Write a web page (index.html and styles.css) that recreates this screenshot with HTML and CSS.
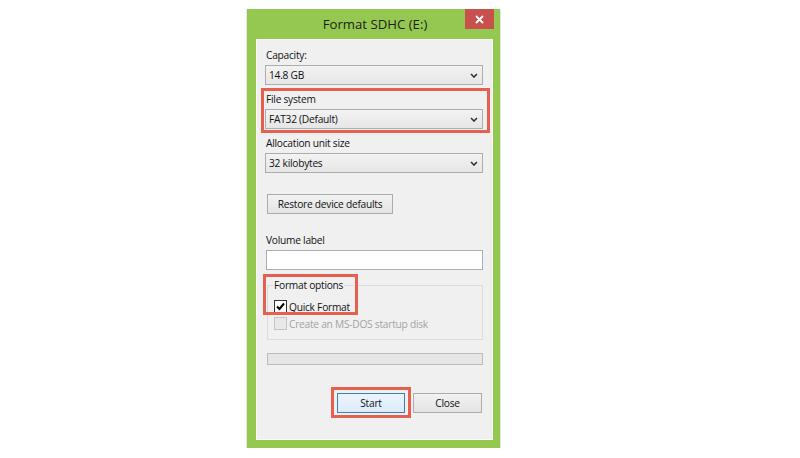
FILE: index.html
```html
<!DOCTYPE html>
<html lang="en">
<head>
    <meta charset="UTF-8">
    <title>Format SDHC (E:)</title>
    <link rel="stylesheet" href="styles.css">
</head>
<body>
    <div class="window">
        <div class="titlebar">
            <span></span>
            <div class="title">Format SDHC (E:)</div>
            <button class="close-btn" aria-label="Close">
                <svg width="9" height="9" viewBox="0 0 9 9"><path d="M1 1L8 8M8 1L1 8" stroke="#fff" stroke-width="1.8" fill="none"/></svg>
            </button>
        </div>

        <div class="client">
            <div class="label">Capacity:</div>
            <div class="combo">
                <span>14.8 GB</span>
                <svg class="chevron" width="8" height="5" viewBox="0 0 8 5"><path d="M1 1L4 4L7 1" stroke="#333" stroke-width="1.6" fill="none"/></svg>
            </div>

            <div class="marked-field">
                <div class="label">File system</div>
                <div class="combo">
                    <span>FAT32 (Default)</span>
                    <svg class="chevron" width="8" height="5" viewBox="0 0 8 5"><path d="M1 1L4 4L7 1" stroke="#333" stroke-width="1.6" fill="none"/></svg>
                </div>
            </div>

            <div class="label label-tight">Allocation unit size</div>
            <div class="combo">
                <span>32 kilobytes</span>
                <svg class="chevron" width="8" height="5" viewBox="0 0 8 5"><path d="M1 1L4 4L7 1" stroke="#333" stroke-width="1.6" fill="none"/></svg>
            </div>

            <div class="restore-row">
                <button class="btn btn-restore">Restore device defaults</button>
            </div>

            <div class="label label-volume">Volume label</div>
            <div class="textbox"></div>

            <div class="group">
                <div class="group-title">Format options</div>
                <div class="group-box">
                    <div class="check-row">
                        <span class="checkbox checked">
                            <svg width="11" height="11" viewBox="0 0 11 11"><path d="M2 5.5L4.5 8L9 2.5" stroke="#000" stroke-width="2" fill="none"/></svg>
                        </span>
                        Quick Format
                    </div>
                    <div class="check-row disabled">
                        <span class="checkbox"></span>
                        Create an MS-DOS startup disk
                    </div>
                </div>
                <span class="mark mark-options"></span>
            </div>

            <div class="progress"></div>

            <div class="buttons">
                <div class="marked-btn">
                    <button class="btn btn-default">Start</button>
                </div>
                <button class="btn btn-close">Close</button>
            </div>
        </div>
    </div>
</body>
</html>
```

FILE: styles.css
```css
body {
    margin: 0;
    background: #fff;
    font-family: "Open Sans", "Noto Sans", sans-serif;
    font-size: 10.2px;
    letter-spacing: -0.25px;
    color: #111;
}
.window {
    width: 253px;
    margin: 9px 0 0 247px;
    padding: 0 7px 8px 9px;
    box-sizing: border-box;
    background: #94c850;
    box-shadow: 0 1px 1px rgba(40, 50, 30, 0.7);
}
.titlebar {
    display: grid;
    grid-template-columns: 1fr auto 1fr;
    height: 30px;
    margin-right: -1px;
}
.title {
    align-self: center;
    font-size: 13.2px;
    letter-spacing: 0;
    color: #1e1e1e;
}
.close-btn {
    justify-self: end;
    width: 29px;
    height: 20px;
    border: none;
    padding: 0;
    background: #c9514d;
    display: flex;
    align-items: center;
    justify-content: center;
}
.client {
    height: 401px;
    box-sizing: border-box;
    padding: 8px 9px 0 9px;
    background: #f0f0f0;
    border: 1px solid #f9f9f9;
}
.label {
    line-height: 15px;
}
.label-tight {
    margin-top: 3px;
}
.label-volume {
    margin-top: 19px;
}
.combo {
    display: flex;
    align-items: center;
    justify-content: space-between;
    height: 20px;
    margin: 2px 0 0 -1px;
    padding: 0 4px 0 3px;
    box-sizing: border-box;
    border: 1px solid #adadad;
    background: linear-gradient(#f3f3f3, #e6e6e6);
}
.marked-field {
    margin: 3px -7px 0 -5px;
    padding: 1px 4px 1px 2px;
    border: 3px solid #e5604f;
}
.restore-row {
    margin-top: 21px;
    padding-left: 1px;
}
.btn {
    height: 20px;
    padding: 0 8px;
    font-family: inherit;
    font-size: inherit;
    letter-spacing: inherit;
    color: #111;
    border: 1px solid #acacac;
    background: linear-gradient(#f2f2f2, #e4e4e4);
}
.btn-restore {
    width: 126px;
}
.textbox {
    height: 20px;
    margin-top: 2px;
    box-sizing: border-box;
    border: 1px solid #abadb3;
    background: #fff;
}
.group {
    position: relative;
    margin: 8px 0 0 1px;
}
.group-title {
    position: relative;
    z-index: 1;
    display: table;
    margin-left: 6px;
    padding: 0 1px;
    line-height: 15px;
    background: #f0f0f0;
}
.group-box {
    margin-top: -8px;
    padding: 13px 6px 8px 6px;
    border: 1px solid #dcdcdc;
}
.check-row {
    display: flex;
    align-items: center;
    gap: 2px;
    height: 15px;
}
.check-row + .check-row {
    margin-top: 2px;
}
.checkbox {
    width: 13px;
    height: 13px;
    box-sizing: border-box;
    border: 1px solid #333;
    background: #fff;
    display: flex;
    align-items: center;
    justify-content: center;
}
.disabled {
    color: #a3a3a3;
}
.disabled .checkbox {
    border-color: #c4c4c4;
    background: #e8e8e8;
}
.mark {
    position: absolute;
    box-sizing: border-box;
    border: 3px solid #e5604f;
    pointer-events: none;
}
.mark-options {
    left: -4px;
    top: -4px;
    width: 95px;
    height: 41px;
}
.progress {
    height: 12px;
    margin: 13px 0 0 1px;
    box-sizing: border-box;
    border: 1px solid #bcbcbc;
    background: #e6e6e6;
}
.buttons {
    display: flex;
    justify-content: flex-end;
    align-items: center;
    gap: 2px;
    margin-top: 28px;
    padding-right: 1px;
}
.marked-btn {
    margin: -6px 0 -5px;
    padding: 3px 3px 2px;
    border: 3px solid #e5604f;
}
.btn-default {
    width: 68px;
    border-color: #3c7fb1;
    background: linear-gradient(#eaf4fc, #dcecfc);
}
.btn-close {
    width: 69px;
}
```
